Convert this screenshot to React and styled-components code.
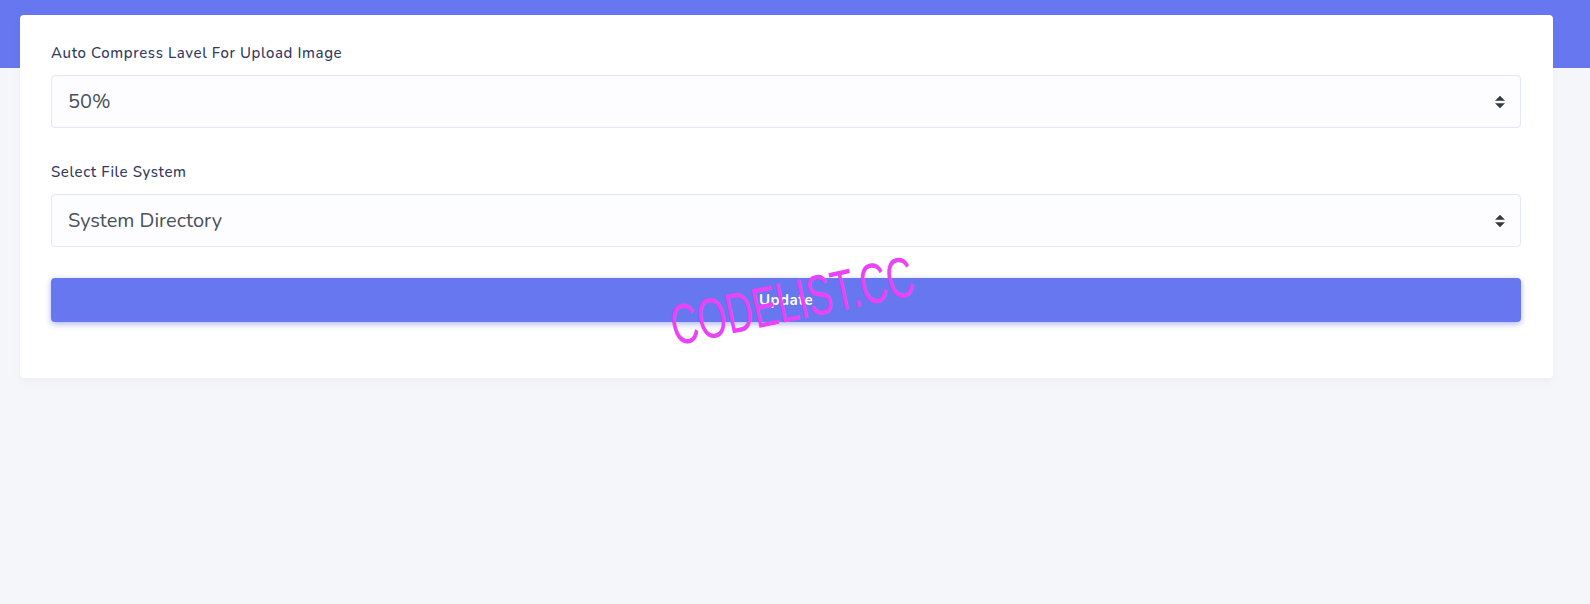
import React, { useState } from 'react'
import styled, { createGlobalStyle } from 'styled-components';

const GlobalStyle = createGlobalStyle`
    html, body {
        margin: 0;
        padding: 0;
        background: #f4f6f9;
        font-family: "Nunito", "Open Sans", sans-serif;
    }
`;

const Page = styled.div`
    position: relative;
    min-height: 604px;
    background: #f4f6f9;
`;

const TopBar = styled.div`
    height: 68px;
    background: #6777ef;
`;

const Card = styled.div`
    width: 1533px;
    margin: -53px 0 0 20px;
    box-sizing: border-box;
    padding: 29px 32px 56px 31px;
    background: #fff;
    border-radius: 4px;
    box-shadow: 0 4px 8px rgba(0, 0, 0, 0.03);
`;

const FormGroup = styled.div`
    margin-bottom: ${props => props.last ? '31px' : '35px'};
`;

const Label = styled.label`
    display: block;
    margin-bottom: 13px;
    font-size: 15px;
    line-height: 18px;
    font-weight: 500;
    letter-spacing: 0.6px;
    color: #34395e;
`;

const SelectWrap = styled.div`
    position: relative;
`;

const Select = styled.select`
    display: block;
    width: 100%;
    height: 53px;
    box-sizing: border-box;
    padding: 0 40px 0 16px;
    appearance: none;
    background: #fdfdff;
    border: 1px solid #e4e6fc;
    border-radius: 4px;
    font-family: inherit;
    font-size: 20px;
    color: #495057;
    outline: none;
`;

const Arrow = styled.svg`
    position: absolute;
    right: 16px;
    top: 50%;
    transform: translateY(-50%);
    pointer-events: none;
`;

const Button = styled.button`
    display: block;
    width: 100%;
    height: 44px;
    border: none;
    border-radius: 4px;
    background: #6777ef;
    box-shadow: 0 2px 6px #acb5f6;
    color: #fff;
    font-family: inherit;
    font-size: 15px;
    font-weight: 700;
    letter-spacing: 0.5px;
    cursor: pointer;
`;

const Watermark = styled.div`
    position: absolute;
    left: 792px;
    top: 301px;
    transform: translate(-50%, -50%) rotate(-12deg) scaleX(0.655);
    font-family: "Liberation Sans", Arial, sans-serif;
    font-size: 57px;
    line-height: 1;
    color: #e843f4;
    white-space: nowrap;
    pointer-events: none;
`;

function SortArrow() {
    return (
        <Arrow width="10" height="13" viewBox="0 0 4 5">
            <path d="M2 0L0 2h4zm0 5L0 3h4z" fill="#343a40" />
        </Arrow>
    )
}

function App() {
    const [level, setLevel] = useState('50');
    const [fileSystem, setFileSystem] = useState('system');

    return (
        <Page>
            <GlobalStyle />
            <TopBar />
            <Card>
                <FormGroup>
                    <Label>Auto Compress Lavel For Upload Image</Label>
                    <SelectWrap>
                        <Select value={level} onChange={(e) => setLevel(e.target.value)}>
                            {[10, 20, 30, 40, 50, 60, 70, 80, 90, 100].map(v =>
                                <option key={v} value={String(v)}>{v}%</option>
                            )}
                        </Select>
                        <SortArrow />
                    </SelectWrap>
                </FormGroup>

                <FormGroup last>
                    <Label>Select File System</Label>
                    <SelectWrap>
                        <Select value={fileSystem} onChange={(e) => setFileSystem(e.target.value)}>
                            <option value="system">System Directory</option>
                            <option value="s3">Amazon S3</option>
                        </Select>
                        <SortArrow />
                    </SelectWrap>
                </FormGroup>

                <Button>Update</Button>
            </Card>
            <Watermark>CODELIST.CC</Watermark>
        </Page>
    )
}

export default App
